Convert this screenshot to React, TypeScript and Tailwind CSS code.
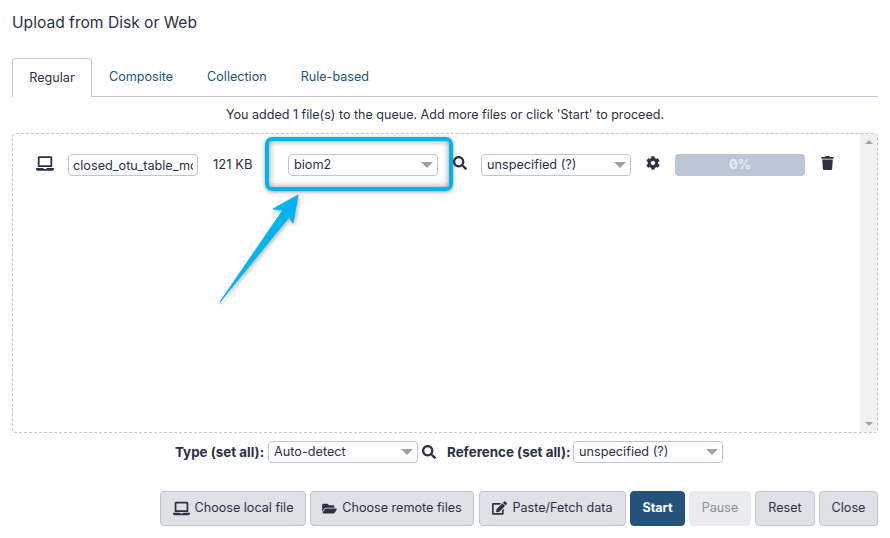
import React from "react";
import { FaLaptop, FaSearch, FaCog, FaTrash, FaFolderOpen, FaEdit } from "react-icons/fa";

function Select({ text, className = "" }: { text: string; className?: string }) {
  return (
    <div className={`flex h-[22px] w-[150px] shrink-0 items-center justify-between rounded-[4px] border border-[#bdc6d5] bg-white pl-[5px] pr-[4px] text-[12.7px] text-[#2c3143] ${className}`}>
      <span>{text}</span>
      <span className="h-0 w-0 border-x-[6px] border-t-[6px] border-x-transparent border-t-[#a0a0a0]" />
    </div>
  );
}

function Btn({ children, className = "", tone = "bg-[#dee2e6] border-[#bdc6d5] text-[#2c3143]" }: { children: React.ReactNode; className?: string; tone?: string }) {
  return (
    <div className={`flex h-[35px] shrink-0 items-center justify-center gap-[5px] rounded-[4px] border pb-[1px] text-[12.6px] ${tone} ${className}`}>
      {children}
    </div>
  );
}

export default function App() {
  return (
    <div className="relative h-[538px] w-[890px] overflow-hidden bg-white font-['Inter','Noto_Sans',sans-serif] text-[#2c3143]">
      <div className="pl-3 pr-3 pt-[13px]">
        <h4 className="h-[45px] text-[15.6px] leading-[20px]">Upload from Disk or Web</h4>

        <div className="flex h-[39px] border-b border-[#bdc6d5] text-[12.6px] leading-[38px]">
          <div className="h-[39px] w-[80px] rounded-t-[4px] border border-b-0 border-[#bdc6d5] bg-white text-center">Regular</div>
          <div className="ml-[17px] text-[#25537b]">Composite</div>
          <div className="ml-[34px] text-[#25537b]">Collection</div>
          <div className="ml-[34px] text-[#25537b]">Rule-based</div>
        </div>

        <div className="h-[36px] text-center text-[12.55px] leading-[35px]">
          You added 1 file(s) to the queue. Add more files or click 'Start' to proceed.
        </div>

        <div className="flex h-[300px] w-[866px] rounded-[4px] border border-dashed border-[#bdc6d5]">
          <div className="flex min-w-0 flex-1 items-start pl-[23px] pt-[20px]">
            <FaLaptop className="mt-[2px] h-[15px] w-[18px] shrink-0" />
            <input
              readOnly
              value="closed_otu_table_mc_rep_set"
              className="ml-[14px] h-[22px] w-[130px] shrink-0 rounded-[4px] border border-[#bdc6d5] bg-white pl-[4px] pr-[4px] text-[12.7px] text-[#2c3143] outline-none"
            />
            <div className="ml-[15px] w-[75px] shrink-0 text-[13px] leading-[20px]">121 KB</div>
            <Select text="biom2" />
            <FaSearch className="ml-[15px] mt-[2px] h-[14px] w-[14px] shrink-0" />
            <Select text="unspecified (?)" className="ml-[14px]" />
            <FaCog className="ml-[15px] mt-[2px] h-[14px] w-[14px] shrink-0" />
            <div className="ml-[15px] flex h-[22px] w-[130px] shrink-0 items-center justify-center rounded-[4px] bg-[#bdc6d5] text-[13px] font-bold text-[#e8ebf0] [font-feature-settings:'zero']">0%</div>
            <FaTrash className="ml-[16px] mt-[2px] h-[14px] w-[13px] shrink-0" />
          </div>
          <div className="flex w-[17px] shrink-0 flex-col items-center justify-between bg-[#f1f1f1] py-[6px]">
            <span className="h-0 w-0 border-x-[4px] border-b-[4px] border-x-transparent border-b-[#a3a3a3]" />
            <span className="h-0 w-0 border-x-[4px] border-t-[4px] border-x-transparent border-t-[#a3a3a3]" />
          </div>
        </div>

        <div className="mt-[8px] flex h-[22px] items-center pl-[163px] text-[13.4px]">
          <span className="w-[93px] shrink-0 whitespace-nowrap font-bold">Type (set all):</span>
          <Select text="Auto-detect" />
          <FaSearch className="ml-[4px] h-[14px] w-[14px] shrink-0" />
          <span className="ml-[11px] w-[126px] shrink-0 whitespace-nowrap font-bold">Reference (set all):</span>
          <Select text="unspecified (?)" />
        </div>

        <div className="mt-[28px] flex gap-[4px] pl-[148px]">
          <Btn className="w-[146px]"><FaLaptop className="h-[15px] w-[17px]" />Choose local file</Btn>
          <Btn className="w-[164px]"><FaFolderOpen className="h-[13px] w-[15px]" />Choose remote files</Btn>
          <Btn className="ml-[1px] w-[147px]"><FaEdit className="h-[14px] w-[15px]" />Paste/Fetch data</Btn>
          <Btn className="w-[55px] font-bold" tone="border-[#25527b] bg-[#25527b] text-white">Start</Btn>
          <Btn className="w-[62px]" tone="border-[#e9ebef] bg-[#e9ebef] text-[#8b8f9b]">Pause</Btn>
          <Btn className="w-[60px]">Reset</Btn>
          <Btn className="w-[59px]">Close</Btn>
        </div>
      </div>

      <div className="absolute left-[265px] top-[137px] h-[54px] w-[188px] rounded-[7px] border-[4px] border-[#00b4f0] shadow-[0_1px_4px_rgba(0,0,0,0.35),inset_0_0_6px_rgba(0,0,0,0.45)]" />
      <svg className="absolute left-[210px] top-[185px]" width="100" height="125" viewBox="0 0 100 125" style={{ filter: "drop-shadow(1px 2px 2px rgba(0,0,0,0.3))" }}>
        <path d="M88 10 L83 38 L79 32 L10 117 L73 25 L63 24 Z" fill="#00b4f0" stroke="#00b4f0" strokeWidth="1" strokeLinejoin="round" />
      </svg>
    </div>
  );
}
